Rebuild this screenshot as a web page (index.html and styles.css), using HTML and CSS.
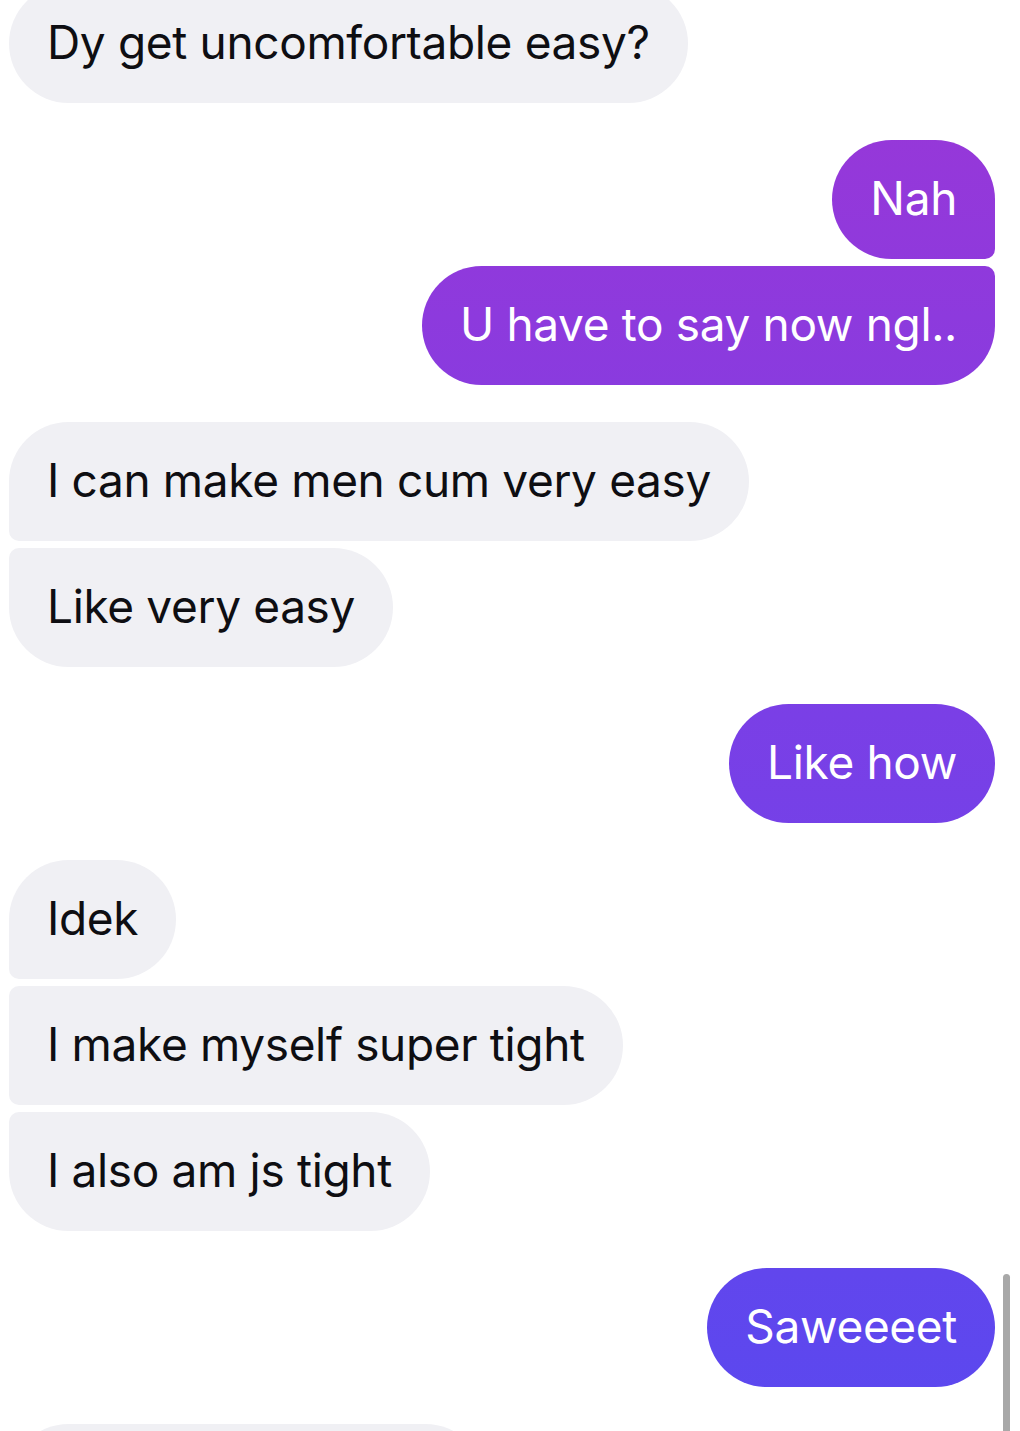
FILE: index.html
```html
<!DOCTYPE html>
<html lang="en">
<head>
    <meta charset="UTF-8">
    <meta name="viewport" content="width=device-width, initial-scale=1.0">
    <title>Chat</title>
    <link rel="stylesheet" href="styles.css">
</head>
<body>
    <div class="chat">
        <div class="group in">
            <div class="bubble">Dy get uncomfortable easy?</div>
        </div>
        <div class="group out">
            <div class="bubble">Nah</div>
            <div class="bubble">U have to say now ngl..</div>
        </div>
        <div class="group in">
            <div class="bubble">I can make men cum very easy</div>
            <div class="bubble">Like very easy</div>
        </div>
        <div class="group out">
            <div class="bubble">Like how</div>
        </div>
        <div class="group in">
            <div class="bubble">Idek</div>
            <div class="bubble">I make myself super tight</div>
            <div class="bubble">I also am js tight</div>
        </div>
        <div class="group out">
            <div class="bubble">Saweeeet</div>
        </div>
        <div class="group in">
            <div class="bubble bubble-cut">&nbsp;</div>
        </div>
    </div>
    <div class="scrollbar"></div>
</body>
</html>
```

FILE: styles.css
```css
html, body {
    height: 1431px;
    overflow: hidden;
}
body {
    margin: 0;
    background-color: #ffffff;
    font-family: 'Inter', 'Roboto', sans-serif;
}
.chat {
    display: flex;
    flex-direction: column;
    gap: 37px;
    margin-top: -16px;
}
.group {
    display: flex;
    flex-direction: column;
    gap: 7px;
}
.group.in {
    align-items: flex-start;
    padding-left: 9px;
}
.group.out {
    align-items: flex-end;
    padding-right: 25px;
}
.bubble {
    font-size: 46px;
    letter-spacing: -0.35px;
    line-height: 55px;
    padding: 31px 38px 33px;
    border-radius: 60px;
    white-space: nowrap;
}
.in .bubble {
    background-color: #f0f0f4;
    color: #0e0e12;
}
.out .bubble {
    color: #ffffff;
    background: linear-gradient(to bottom, #9c36d6 0%, #7a3fe6 50%, #5a48ef 100%);
    background-attachment: fixed;
}
.bubble-cut {
    width: 400px;
}

/* grouped corners */
.in .bubble:not(:last-child) {
    border-bottom-left-radius: 10px;
}
.in .bubble:not(:first-child) {
    border-top-left-radius: 10px;
}
.out .bubble:not(:last-child) {
    border-bottom-right-radius: 10px;
}
.out .bubble:not(:first-child) {
    border-top-right-radius: 10px;
}

.scrollbar {
    position: absolute;
    top: 1274px;
    right: 10px;
    width: 7px;
    height: 157px;
    border-radius: 4px 4px 0 0;
    background-color: #a8a8a8;
}
```
